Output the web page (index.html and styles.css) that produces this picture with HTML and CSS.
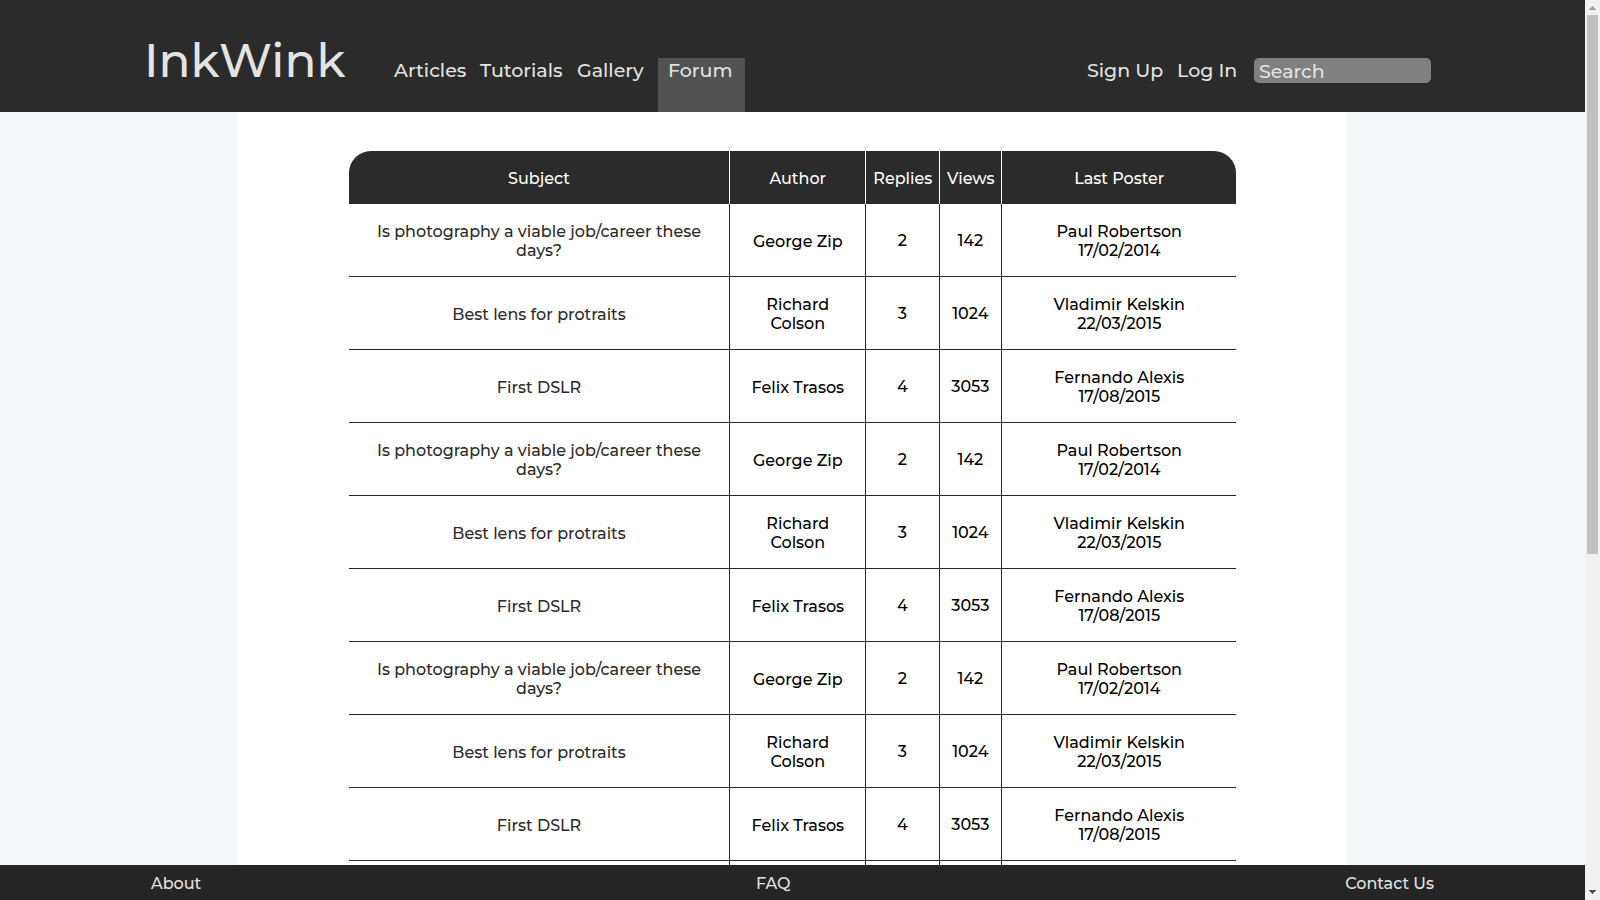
FILE: index.html
```html
<!DOCTYPE html>
<html lang="en">
<head>
<meta charset="utf-8">
<title>InkWink - Forum</title>
<link rel="stylesheet" href="styles.css">
</head>
<body>
<div class="viewport">
<div class="page">
<header class="header">
  <a class="logo" href="#">InkWink</a>
  <nav class="nav">
    <a class="nav-articles" href="#">Articles</a>
    <a class="nav-tutorials" href="#">Tutorials</a>
    <a class="nav-gallery" href="#">Gallery</a>
    <a class="active" href="#">Forum</a>
  </nav>
  <div class="account">
    <a class="signup" href="#">Sign Up</a>
    <a class="login" href="#">Log In</a>
    <input class="search" type="search" placeholder="Search" aria-label="Search">
  </div>
</header>
<main class="content">
  <table class="topics">
    <colgroup><col><col class="col-author"><col class="col-replies"><col class="col-views"><col class="col-last"></colgroup>
    <thead><tr><th>Subject</th><th>Author</th><th>Replies</th><th>Views</th><th>Last Poster</th></tr></thead>
    <tbody>
      <tr><td><a href="#">Is photography a viable job/career these days?</a></td><td>George Zip</td><td>2</td><td>142</td><td>Paul Robertson<br>17/02/2014</td></tr>
      <tr><td><a href="#">Best lens for protraits</a></td><td>Richard Colson</td><td>3</td><td>1024</td><td>Vladimir Kelskin<br>22/03/2015</td></tr>
      <tr><td><a href="#">First DSLR</a></td><td>Felix Trasos</td><td>4</td><td>3053</td><td>Fernando Alexis<br>17/08/2015</td></tr>
      <tr><td><a href="#">Is photography a viable job/career these days?</a></td><td>George Zip</td><td>2</td><td>142</td><td>Paul Robertson<br>17/02/2014</td></tr>
      <tr><td><a href="#">Best lens for protraits</a></td><td>Richard Colson</td><td>3</td><td>1024</td><td>Vladimir Kelskin<br>22/03/2015</td></tr>
      <tr><td><a href="#">First DSLR</a></td><td>Felix Trasos</td><td>4</td><td>3053</td><td>Fernando Alexis<br>17/08/2015</td></tr>
      <tr><td><a href="#">Is photography a viable job/career these days?</a></td><td>George Zip</td><td>2</td><td>142</td><td>Paul Robertson<br>17/02/2014</td></tr>
      <tr><td><a href="#">Best lens for protraits</a></td><td>Richard Colson</td><td>3</td><td>1024</td><td>Vladimir Kelskin<br>22/03/2015</td></tr>
      <tr><td><a href="#">First DSLR</a></td><td>Felix Trasos</td><td>4</td><td>3053</td><td>Fernando Alexis<br>17/08/2015</td></tr>
      <tr class="spacer"><td></td><td></td><td></td><td></td><td></td></tr>
    </tbody>
  </table>
</main>
<footer class="footer">
  <a href="#">About</a><a href="#">FAQ</a><a href="#">Contact Us</a>
</footer>
</div>
<div class="scrollbar" aria-hidden="true">
  <svg class="arrow" viewBox="0 0 15 15" shape-rendering="crispEdges"><path d="M7 6h1v1h1v1h1v1h1v1H4V9h1V8h1V7h1z" fill="#a0a0a0"/></svg>
  <div class="track"><div class="thumb"></div></div>
  <svg class="arrow" viewBox="0 0 15 15" shape-rendering="crispEdges"><path d="M4 5h7v1h-1v1H9v1H8v1H7V8H6V7H5V6H4z" fill="#505050"/></svg>
</div>
</div>
</body>
</html>
```
FILE: styles.css
```css
* { box-sizing: border-box; }
body {
  margin: 0;
  background: #f7f8fa;
  color: #000;
  font: 500 16px/19px Montserrat, Inter, sans-serif;
}
a { color: inherit; text-decoration: none; }
.viewport { display: flex; height: 100vh; }
.page { flex: 1; min-width: 0; display: flex; flex-direction: column; }
.header {
  display: flex;
  flex: none;
  height: 112px;
  padding: 0 154px 0 144px;
  background: #2b2b2b;
  color: #e3e3e3;
  font-size: 19px;
  line-height: 25px;
}
.logo { width: 250px; padding-top: 33px; font-size: 47px; line-height: 56px; }
.nav { display: flex; padding-top: 58px; }
.nav-articles { width: 86px; }
.nav-tutorials { width: 97px; }
.nav-gallery { width: 81px; }
.nav .active { width: 87px; padding-left: 10px; background: #515151; }
.account { display: flex; align-items: flex-start; margin-left: auto; padding-top: 58px; }
.signup { width: 90px; }
.login { width: 77px; }
.search {
  width: 177px;
  height: 25px;
  padding: 1px 5px 0;
  border: 0;
  border-radius: 5px;
  background: #808080;
  color: #e3e3e3;
  font: inherit;
  appearance: none;
}
.search::placeholder { color: #e3e3e3; opacity: 1; }
.content {
  flex: 1;
  min-height: 0;
  overflow: hidden;
  width: 70%;
  margin: 0 auto;
  padding-top: 39px;
  background: #fff;
}
.topics {
  width: 80%;
  margin: 0 auto;
  table-layout: fixed;
  border-spacing: 0;
  text-align: center;
}
.col-author { width: 136px; }
.col-replies { width: 74px; }
.col-views { width: 62px; }
.col-last { width: 235px; }
th { padding: 18px 0 16px; background: #2b2b2b; color: #fff; font-weight: 500; }
th:first-child { border-top-left-radius: 22px; }
th:last-child { border-top-right-radius: 22px; }
th + th { border-left: 1px solid #fff; }
td { height: 73px; padding: 18px 20px 16px; border-bottom: 1px solid #2b2b2b; }
td + td { border-left: 1px solid #2b2b2b; }
td:nth-child(3), td:nth-child(4) { padding: 17px 1px 17px 0; }
td a { color: #2b2b2b; }
.footer {
  display: flex;
  flex: none;
  justify-content: space-between;
  padding: 9px 151px 7px;
  background: #252525;
  color: #e3e3e3;
}
.scrollbar { width: 15px; display: flex; flex-direction: column; background: #f1f1f1; }
.arrow { width: 15px; height: 15px; flex: none; }
.track { flex: 1; padding: 0 2px; }
.thumb { height: 62%; background: #c1c1c1; }
```
